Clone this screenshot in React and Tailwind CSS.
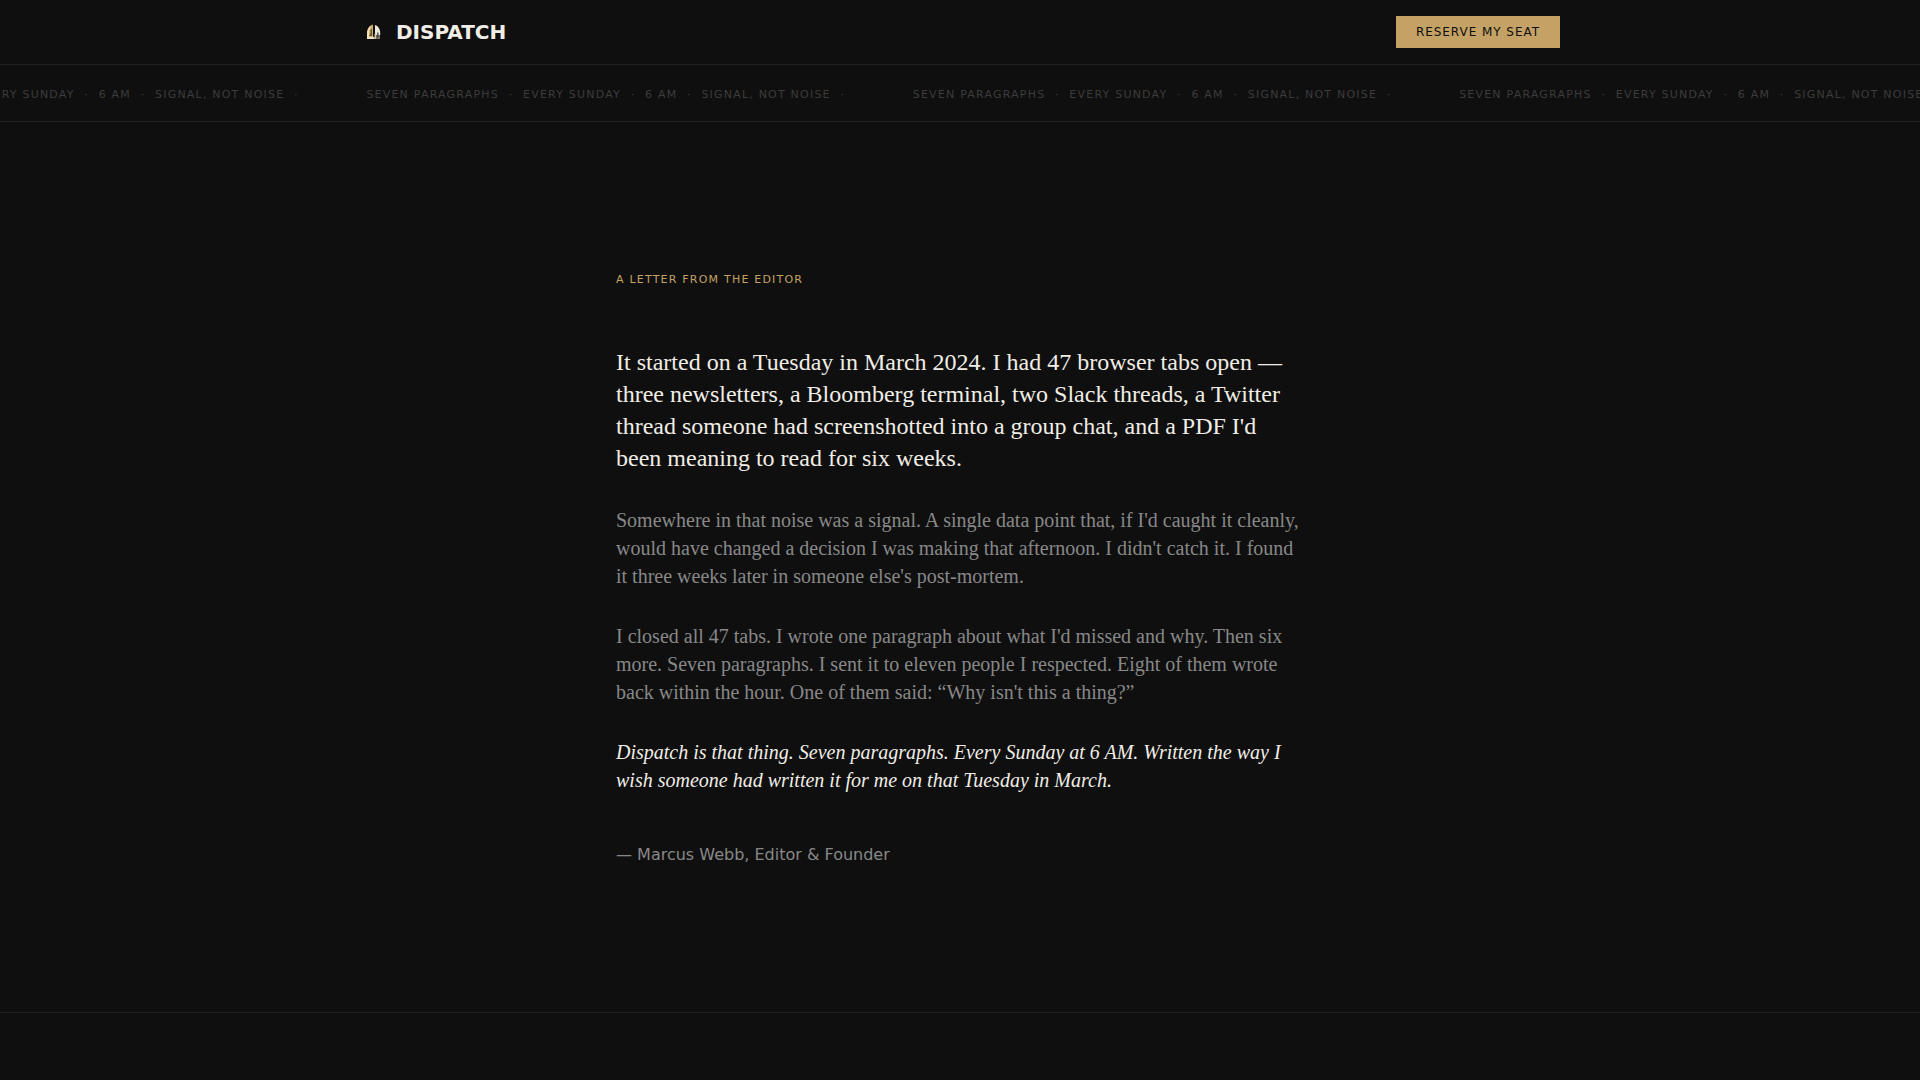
const phrases = ['Seven paragraphs', 'Every Sunday', '6 AM', 'Signal, not noise'];

function Logo() {
  return (
    <svg viewBox="0 0 28 28" className="w-7 h-7 shrink-0" aria-hidden="true">
      <path d="M7 21v-6c0-4.200 2.200-7.500 6-8.500V21z" fill="#c9a965" />
      <path d="M7 17c-.2-4.500 1.500-8 4.500-9.500-1.200 2-2.300 4-2.500 8V21H7z" fill="#efe3c4" />
      <path d="M15 7c3.200 1 5.200 4 5.200 8v2H15z" fill="#ece8de" />
      <path d="M10.500 12l1.500-1.500V18h-3l1.500-2.500z" fill="#6b5630" />
      <path d="M8.500 18.800h6V21h-6z" fill="#eee2c6" />
      <path d="M14.500 16h1.700v5h-1.700z" fill="#d8c79d" />
      <path d="M16.200 17h3.800v4h-3.800z" fill="#77726a" />
      <path d="M17.200 14.500h1.300V19h-1.300z" fill="#3f3d39" />
    </svg>
  );
}

function TickerGroup({ hidden }) {
  return (
    <div className="shrink-0 pr-[58px]" aria-hidden={hidden}>
      <span className="text-[11px] leading-none tracking-[0.11em] uppercase text-[#3c3c3c]">
        {phrases.map((phrase) => (
          <span key={phrase}>
            {phrase}
            <span className="inline-block w-6 text-center">·</span>
          </span>
        ))}
      </span>
    </div>
  );
}

export default function App() {
  return (
    <div className="min-h-screen overflow-x-hidden bg-[#0f0f0f] text-[#f0ede6] font-['DejaVu_Sans',sans-serif]">
      <header className="border-b border-[#222222]">
        <div className="max-w-[1200px] mx-auto h-16 flex items-center justify-between">
          <a href="#" className="flex items-center gap-2 text-xl font-bold">
            <Logo />
            DISPATCH
          </a>
          <button className="h-8 px-5 bg-[#c4a265] text-[#0f0f0f] text-xs tracking-[0.08em] uppercase">
            Reserve my seat
          </button>
        </div>
      </header>

      {/* Ticker */}
      <div className="overflow-hidden border-b border-[#222222] py-4">
        <div className="flex -ml-[180px] leading-6 whitespace-nowrap">
          <TickerGroup />
          <TickerGroup hidden />
          <TickerGroup hidden />
          <TickerGroup hidden />
        </div>
      </div>

      <main>
        {/* Letter */}
        <section className="border-b border-[#1e1e1e] py-36">
          <div className="max-w-[688px] mx-auto">
            <h2 className="mb-14 leading-6">
              <span className="text-[11px] leading-none tracking-[0.11em] uppercase text-[#c4a265]">
                A letter from the editor
              </span>
            </h2>
            <div className="space-y-8 font-['Liberation_Serif',serif] text-xl leading-7 text-[#888888]">
              <p className="text-2xl leading-8 text-[#f0ede6]">
                It started on a Tuesday in March 2024. I had 47 browser tabs open — three newsletters, a Bloomberg
                terminal, two Slack threads, a Twitter thread someone had screenshotted into a group chat, and a PDF
                I'd been meaning to read for six weeks.
              </p>
              <p>
                Somewhere in that noise was a signal. A single data point that, if I'd caught it cleanly, would have
                changed a decision I was making that afternoon. I didn't catch it. I found it three weeks later in
                someone else's post-mortem.
              </p>
              <p>
                I closed all 47 tabs. I wrote one paragraph about what I'd missed and why. Then six more. Seven
                paragraphs. I sent it to eleven people I respected. Eight of them wrote back within the hour. One of
                them said: “Why isn't this a thing?”
              </p>
              <p className="italic text-[#f0ede6]">
                Dispatch is that thing. Seven paragraphs. Every Sunday at 6 AM. Written the way I wish someone had
                written it for me on that Tuesday in March.
              </p>
            </div>
            <p className="mt-12 text-base leading-[26px] text-[#888888]">— Marcus Webb, Editor &amp; Founder</p>
          </div>
        </section>
      </main>
    </div>
  );
}
